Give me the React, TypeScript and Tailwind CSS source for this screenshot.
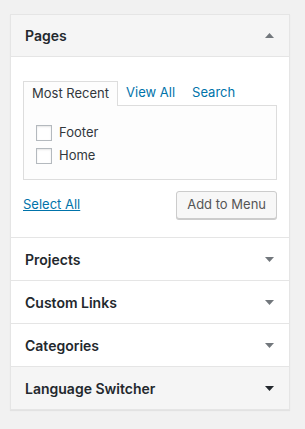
import { useState } from 'react';

const sections = ['Projects', 'Custom Links', 'Categories', 'Language Switcher'];

function Arrow({ up, dark }: { up?: boolean; dark?: boolean }) {
  return (
    <svg width="9" height="5" viewBox="0 0 9 5" className={dark ? 'text-[#23282d]' : 'text-[#72777c]'}>
      {up ? <path d="M0 5 L4.5 0 L9 5 Z" fill="currentColor" /> : <path d="M0 0 L9 0 L4.5 5 Z" fill="currentColor" />}
    </svg>
  );
}

export default function App() {
  const [checked, setChecked] = useState<Record<string, boolean>>({});
  const pages = ['Footer', 'Home'];

  return (
    <div className="min-h-[429px] bg-[#f1f1f1] pt-[14px] pl-[10px] font-['Inter',sans-serif] text-[#23282d]">
      <div className="w-[280px] border border-[#e5e5e5] bg-white shadow-[0_1px_1px_rgba(0,0,0,0.06)]">
        {/* Pages panel */}
        <div className="flex h-[42px] items-center justify-between bg-[#f5f5f5] pl-[14px] pr-[15px] border-b border-[#e5e5e5]">
          <h3 className="text-[14px] font-semibold">Pages</h3>
          <Arrow up />
        </div>
        <div className="px-3 pt-[24px] pb-[18px]">
          <div className="flex items-stretch text-[13px]">
            <div className="relative -mb-px flex h-[25px] items-center border border-b-0 border-[#dddddd] bg-[#fdfdfd] px-[8px] text-[#32373c]">
              Most Recent
            </div>
            <span className="ml-[8px] flex items-center text-[#0073aa]">View All</span>
            <span className="ml-[17px] flex items-center text-[#0073aa]">Search</span>
          </div>
          <div className="h-[75px] border border-[#dddddd] bg-[#fdfdfd] pl-[12px] pt-[19px]">
            {pages.map((p) => (
              <label key={p} className="mb-[7px] flex h-4 items-center text-[13px] text-[#32373c]">
                <input
                  type="checkbox"
                  checked={!!checked[p]}
                  onChange={() => setChecked({ ...checked, [p]: !checked[p] })}
                  className="mr-[7px] h-4 w-4 appearance-none border border-[#b4b9be] bg-white shadow-[inset_0_1px_2px_rgba(0,0,0,0.1)]"
                />
                {p}
              </label>
            ))}
          </div>
          <div className="mt-[11px] flex items-center justify-between">
            <a className="text-[13px] text-[#0073aa] underline">Select All</a>
            <button className="h-[28px] rounded-[3px] border border-[#cccccc] bg-[#f7f7f7] px-[10px] text-[13px] text-[#555555] shadow-[0_1px_0_#cccccc]">
              Add to Menu
            </button>
          </div>
        </div>

        {sections.map((s, i) => {
          const last = i === sections.length - 1;
          return (
            <div
              key={s}
              className={`flex h-[43px] items-center justify-between border-t border-[#e5e5e5] pl-[14px] pr-[15px] ${last ? 'bg-[#f5f5f5]' : 'bg-white'}`}
            >
              <h3 className="text-[14px] font-semibold">{s}</h3>
              <Arrow dark={last} />
            </div>
          );
        })}
      </div>
    </div>
  );
}
